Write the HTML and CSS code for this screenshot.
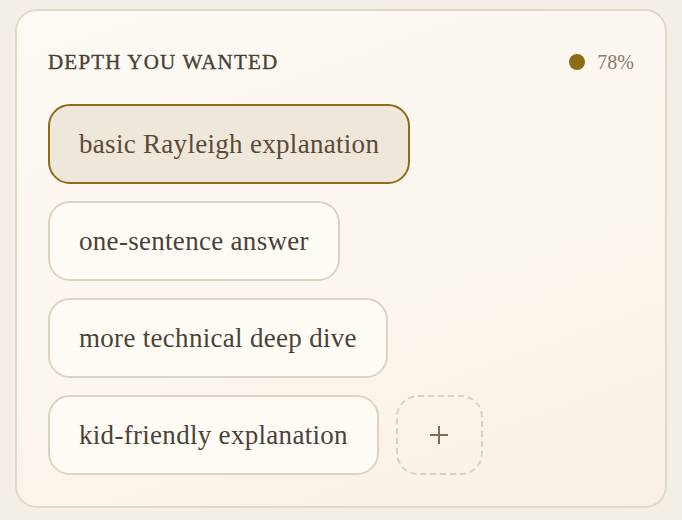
FILE: index.html
```html
<!DOCTYPE html>
<html lang="en">
<head>
<meta charset="utf-8">
<title>Depth you wanted</title>
<link rel="stylesheet" href="styles.css">
</head>
<body>
<section class="card">
  <header class="card-head">
    <h2 class="title">DEPTH YOU WANTED</h2>
    <div class="score"><span class="dot"></span><span class="pct">78%</span></div>
  </header>
  <div class="chips">
    <button class="chip selected">basic Rayleigh explanation</button>
    <button class="chip">one-sentence answer</button>
    <button class="chip">more technical deep dive</button>
    <button class="chip">kid-friendly explanation</button>
    <button class="chip add" aria-label="Add">
      <svg width="20" height="20" viewBox="0 0 20 20"><path d="M10 1v18M1 10h18" stroke="#7d6d5c" stroke-width="2" fill="none"/></svg>
    </button>
  </div>
</section>
</body>
</html>
```
FILE: styles.css
```css
html, body {
  margin: 0;
  padding: 0;
  background: #f3efe7;
  font-family: "Liberation Serif", "Times New Roman", serif;
}
body {
  padding: 9px 15px 12px 15px;
}
.card {
  box-sizing: border-box;
  width: 652px;
  height: 499px;
  border: 2px solid #e2d8c6;
  border-radius: 22px;
  background: linear-gradient(160deg, #fdfaf4 0%, #fbf6ee 55%, #f8f0e4 100%);
  padding: 31px;
}
.card-head {
  display: flex;
  align-items: center;
  justify-content: space-between;
  height: 40px;
  margin-bottom: 22px;
}
.title {
  margin: 0;
  font-size: 21px;
  font-weight: normal;
  letter-spacing: 1.2px;
  color: #4a4034;
  -webkit-text-stroke: 0.35px #4a4034;
}
.score {
  display: flex;
  align-items: center;
  gap: 12px;
}
.dot {
  width: 16px;
  height: 16px;
  border-radius: 50%;
  background: #8d6a16;
}
.pct {
  font-size: 20px;
  color: #8a7b6c;
}
.chips {
  display: flex;
  flex-wrap: wrap;
  gap: 17px;
}
.chip {
  box-sizing: border-box;
  height: 80px;
  padding: 0 29px;
  border: 2px solid #ddd3c3;
  border-radius: 22px;
  background: #fffcf6;
  font-family: inherit;
  font-size: 27px;
  letter-spacing: 0.3px;
  color: #4a4238;
  cursor: pointer;
}
.chip.selected {
  background: #efe7da;
  border-color: #8e6a1a;
  color: #5c4a38;
}
.chip.add {
  width: 87px;
  padding: 0;
  background: transparent;
  border: 2px dashed #dad1c2;
  display: flex;
  align-items: center;
  justify-content: center;
}
```
